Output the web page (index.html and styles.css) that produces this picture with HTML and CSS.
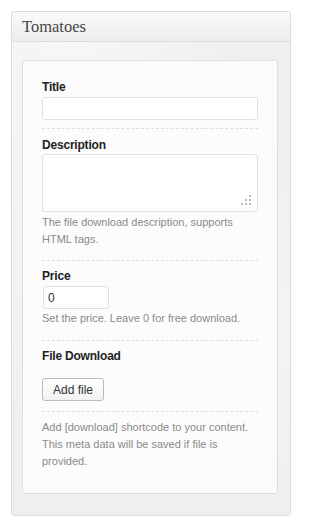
FILE: index.html
```html
<!DOCTYPE html>
<html>
<head>
<meta charset="utf-8">
<link rel="stylesheet" href="styles.css">
</head>
<body>
<div class="box">
  <div class="box-head">Tomatoes</div>
  <div class="box-body">
    <div class="card">
      <div class="field field-title">
        <label class="label">Title</label>
        <input class="input input-full" type="text">
      </div>
      <div class="field field-desc">
        <label class="label">Description</label>
        <div class="textarea-wrap">
          <textarea class="textarea"></textarea>
          <svg class="grip" width="12" height="12" viewBox="0 0 12 12">
            <rect x="8" y="0" width="2" height="2"/>
            <rect x="4" y="4" width="2" height="2"/>
            <rect x="8" y="4" width="2" height="2"/>
            <rect x="0" y="8" width="2" height="2"/>
            <rect x="4" y="8" width="2" height="2"/>
            <rect x="8" y="8" width="2" height="2"/>
          </svg>
        </div>
        <p class="help help-desc">The file download description, supports HTML tags.</p>
      </div>
      <div class="field field-price">
        <label class="label">Price</label>
        <input class="input input-price" type="text" value="0">
        <p class="help help-price">Set the price. Leave 0 for free download.</p>
      </div>
      <div class="field field-file">
        <label class="label">File Download</label>
        <button class="button" type="button">Add file</button>
      </div>
      <div class="field field-note">
        <p class="help">Add [download] shortcode to your content. This meta data will be saved if file is provided.</p>
      </div>
    </div>
  </div>
</div>
</body>
</html>
```

FILE: styles.css
```css
html, body {
  margin: 0;
  padding: 0;
  background: #ffffff;
}

body {
  padding: 11px 10px 0 11px;
  font-family: "Liberation Sans", Arial, sans-serif;
}

.box {
  width: 280px;
  box-sizing: border-box;
  border: 1px solid #dcdcdc;
  border-radius: 3px;
  background: #f1f1f1;
  overflow: hidden;
}

.box-head {
  height: 29px;
  line-height: 29px;
  padding-left: 10px;
  font-family: "Liberation Serif", "Times New Roman", serif;
  font-size: 16.5px;
  color: #464646;
  background: linear-gradient(to bottom, #fafafa, #ececec);
  border-bottom: 1px solid #dcdcdc;
}

.box-body {
  padding: 18px 12px 21px 10px;
  background:
    radial-gradient(ellipse at 20% 10%, rgba(255,255,255,0.5), rgba(255,255,255,0) 60%),
    radial-gradient(ellipse at 80% 60%, rgba(255,255,255,0.4), rgba(255,255,255,0) 50%),
    #efefef;
}

.card {
  width: 256px;
  box-sizing: border-box;
  border: 1px solid #dddddd;
  border-radius: 3px;
  background: #fcfcfc;
  padding: 0 19px 23px;
}

.field {
  display: flex;
  flex-direction: column;
  align-items: flex-start;
  border-bottom: 1px dashed #dedede;
}

.field-title { padding: 19px 0 8px; }
.field-desc { padding: 9px 0 12px; }
.field-price { padding: 8px 0 13px; }
.field-file { padding: 8px 0 10px; }
.field-note { padding: 7px 0 0; border-bottom: none; }

.label {
  display: block;
  font-size: 12px;
  line-height: 14px;
  font-weight: bold;
  letter-spacing: -0.2px;
  color: #222222;
}

.input {
  box-sizing: border-box;
  height: 23px;
  margin: 3px 0 0;
  padding: 0 4px;
  border: 1px solid #dfdfdf;
  border-radius: 3px;
  background: #ffffff;
  font-family: "Liberation Sans", Arial, sans-serif;
  font-size: 12px;
  color: #333333;
  outline: none;
}

.input-full { width: 216px; }

.input-price {
  width: 66px;
  margin-left: 1px;
}

.textarea-wrap {
  position: relative;
  margin-top: 2px;
  width: 216px;
  height: 58px;
}

.textarea {
  display: block;
  box-sizing: border-box;
  width: 216px;
  height: 58px;
  margin: 0;
  border: 1px solid #dfdfdf;
  border-radius: 3px;
  background: #ffffff;
  resize: none;
  outline: none;
}

.grip {
  position: absolute;
  right: 5px;
  bottom: 5px;
  fill: #b9b9b9;
}

.help {
  margin: 2px 0 0;
  font-size: 11px;
  line-height: 17px;
  color: #8a8a8a;
}

.help-price { margin-top: 1px; }
.field-note .help { margin-top: 0; }

.button {
  box-sizing: border-box;
  height: 23px;
  margin-top: 15px;
  padding: 0 10px;
  border: 1px solid #bbbbbb;
  border-radius: 3px;
  background: linear-gradient(to bottom, #ffffff, #f2f2f2);
  font-family: "Liberation Sans", Arial, sans-serif;
  font-size: 12px;
  color: #333333;
  white-space: nowrap;
}
```
